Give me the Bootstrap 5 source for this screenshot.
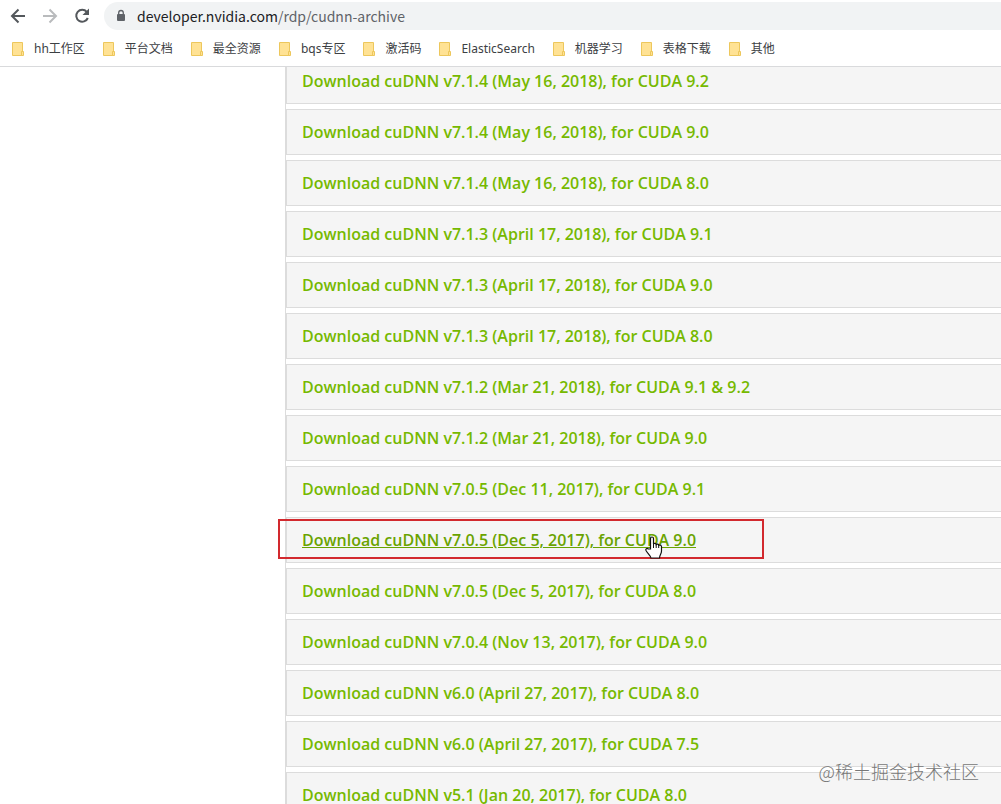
<!DOCTYPE html>
<html lang="zh-CN">
<head>
<meta charset="utf-8">
<meta name="viewport" content="width=device-width, initial-scale=1">
<title>cuDNN Archive</title>
<link href="https://cdn.jsdelivr.net/npm/bootstrap@5.3.0/dist/css/bootstrap.min.css" rel="stylesheet">
<style>
body { font-family: "Open Sans", "Noto Sans CJK SC", sans-serif; background: #fff; }
.toolbar-row { height: 32px; padding-left: 8px; gap: 12px; }
.tool-btn { width: 20px; height: 20px; }
.tool-btn svg, .lock-icon, .folder-icon { display: block; }
.omnibox { height: 28px; background: #f1f3f4; border-radius: 14px 0 0 14px; padding-left: 12px; gap: 11px; }
.url-text { font-family: "Noto Sans CJK SC", sans-serif; font-size: 14px; line-height: 20px; color: #5f6368; }
.url-text b { font-weight: 400; color: #202124; }
.bookmark-row { height: 34px; padding-left: 12px; gap: 18px; }
.bookmark { font-family: "Noto Sans", "Noto Sans CJK SC", sans-serif; font-size: 12px; line-height: 16px; color: #3c4043; gap: 9px; }
.browser-bar { border-bottom: 1px solid #d9dadc; }
.archive-list { margin-left: 285px; margin-top: -9px; border-left: 1px solid #dcdcdc; gap: 5px; }
.archive-row { height: 46px; background: #f5f5f5; border: 1px solid #dcdcdc; border-right: 0; padding-left: 15px; }
.archive-row a { font-weight: 600; font-size: 16px; line-height: 20px; color: #76b900; text-decoration: none; }
.archive-row a.hovered { color: #6aa300; text-decoration: underline; }
.mark-box { left: -9px; top: 1px; width: 486px; height: 40px; border: 2px solid #d2292e; pointer-events: none; }
.hand-cursor { left: 356px; top: 17px; }
.watermark { right: 22px; bottom: 21px; font-family: "Noto Sans CJK SC", sans-serif; font-weight: 300; font-size: 18px; line-height: 24px; color: #777; }
</style>
</head>
<body class="vh-100 overflow-hidden d-flex flex-column position-relative">
<header class="browser-bar flex-shrink-0 bg-white position-relative z-1">
  <div class="toolbar-row d-flex align-items-center">
    <button class="tool-btn btn p-0 border-0" type="button" aria-label="Back"><svg width="20" height="20" viewBox="0 0 20 20" fill="none" stroke="#54585c" stroke-width="2"><path d="M17 10H4M10.500 3.500L4 10l6.500 6.500"/></svg></button>
    <button class="tool-btn btn p-0 border-0" type="button" aria-label="Forward"><svg width="20" height="20" viewBox="0 0 20 20" fill="none" stroke="#b9bbbd" stroke-width="2"><path d="M3 10h13M9.500 3.500L16 10l-6.500 6.500"/></svg></button>
    <button class="tool-btn btn p-0 border-0" type="button" aria-label="Reload"><svg width="20" height="20" viewBox="0 0 20 20"><path d="M14.800 5.800A6 6 0 1 0 15.800 12" fill="none" stroke="#54585c" stroke-width="2"/><path d="M17 2.500V9h-6.500z" fill="#54585c"/></svg></button>
    <div class="omnibox d-flex align-items-center flex-grow-1">
      <svg class="lock-icon" width="10" height="14" viewBox="0 0 10 14"><rect x="1" y="5" width="8" height="7" rx="1" fill="#5f6368"/><path d="M2.700 5.500V3.800a2.300 2.300 0 0 1 4.600 0v1.700" fill="none" stroke="#5f6368" stroke-width="1.300"/></svg>
      <a class="url-text text-decoration-none" href="#"><b>developer.nvidia.com</b>/rdp/cudnn-archive</a>
    </div>
  </div>
  <nav class="bookmark-row d-flex align-items-center" id="bookmarks" aria-label="Bookmarks"></nav>
</header>
<main class="flex-grow-1 overflow-hidden">
  <div class="archive-list d-flex flex-column" id="archive"></div>
</main>
<div class="watermark position-absolute">@稀土掘金技术社区</div>
<script>
const folder = '<svg class="folder-icon" width="13" height="14" viewBox="0 0 13 14"><path d="M.5.5h10v13H.5z" fill="#ffe294" stroke="#edc75c"/><path d="M9.500 9.500h2v4h-2z" fill="#ffe294" stroke="#edc75c"/></svg>';
document.getElementById('bookmarks').innerHTML =
  ['hh工作区','平台文档','最全资源','bqs专区','激活码','ElasticSearch','机器学习','表格下载','其他']
  .map(t => `<a href="#" class="bookmark d-flex align-items-center text-decoration-none text-nowrap">${folder}<span>${t}</span></a>`).join('');
const rows = [
  'v7.1.4 (May 16, 2018), for CUDA 9.2','v7.1.4 (May 16, 2018), for CUDA 9.0','v7.1.4 (May 16, 2018), for CUDA 8.0',
  'v7.1.3 (April 17, 2018), for CUDA 9.1','v7.1.3 (April 17, 2018), for CUDA 9.0','v7.1.3 (April 17, 2018), for CUDA 8.0',
  'v7.1.2 (Mar 21, 2018), for CUDA 9.1 &amp; 9.2','v7.1.2 (Mar 21, 2018), for CUDA 9.0','v7.0.5 (Dec 11, 2017), for CUDA 9.1',
  'v7.0.5 (Dec 5, 2017), for CUDA 9.0','v7.0.5 (Dec 5, 2017), for CUDA 8.0','v7.0.4 (Nov 13, 2017), for CUDA 9.0',
  'v6.0 (April 27, 2017), for CUDA 8.0','v6.0 (April 27, 2017), for CUDA 7.5','v5.1 (Jan 20, 2017), for CUDA 8.0'];
const overlay = '<div class="mark-box position-absolute"></div><svg class="hand-cursor position-absolute" width="22" height="26" viewBox="0 0 22 26"><path d="M7.500 14V3.500a1.500 1.500 0 0 1 3 0V9c.5-1 2.500-.8 2.700.5.700-.8 2.400-.5 2.500.8.900-.6 2.800 0 2.800 1.200V16c0 3-2 4-2 7H8c0-2-3-4-5-7.500-.8-1.600 1-2.700 2.300-1.500z" fill="#fff" stroke="#111" stroke-width="1.200"/><path d="M10.500 9v4M13.200 9.500V13M15.700 10.300V13" stroke="#111"/></svg>';
document.getElementById('archive').innerHTML = rows.map((t, i) =>
  `<div class="archive-row d-flex align-items-center flex-shrink-0 position-relative"><a href="#"${i === 9 ? ' class="hovered"' : ''}>Download cuDNN ${t}</a>${i === 9 ? overlay : ''}</div>`).join('');
</script>
<script src="https://cdn.jsdelivr.net/npm/bootstrap@5.3.0/dist/js/bootstrap.bundle.min.js"></script>
</body>
</html>
